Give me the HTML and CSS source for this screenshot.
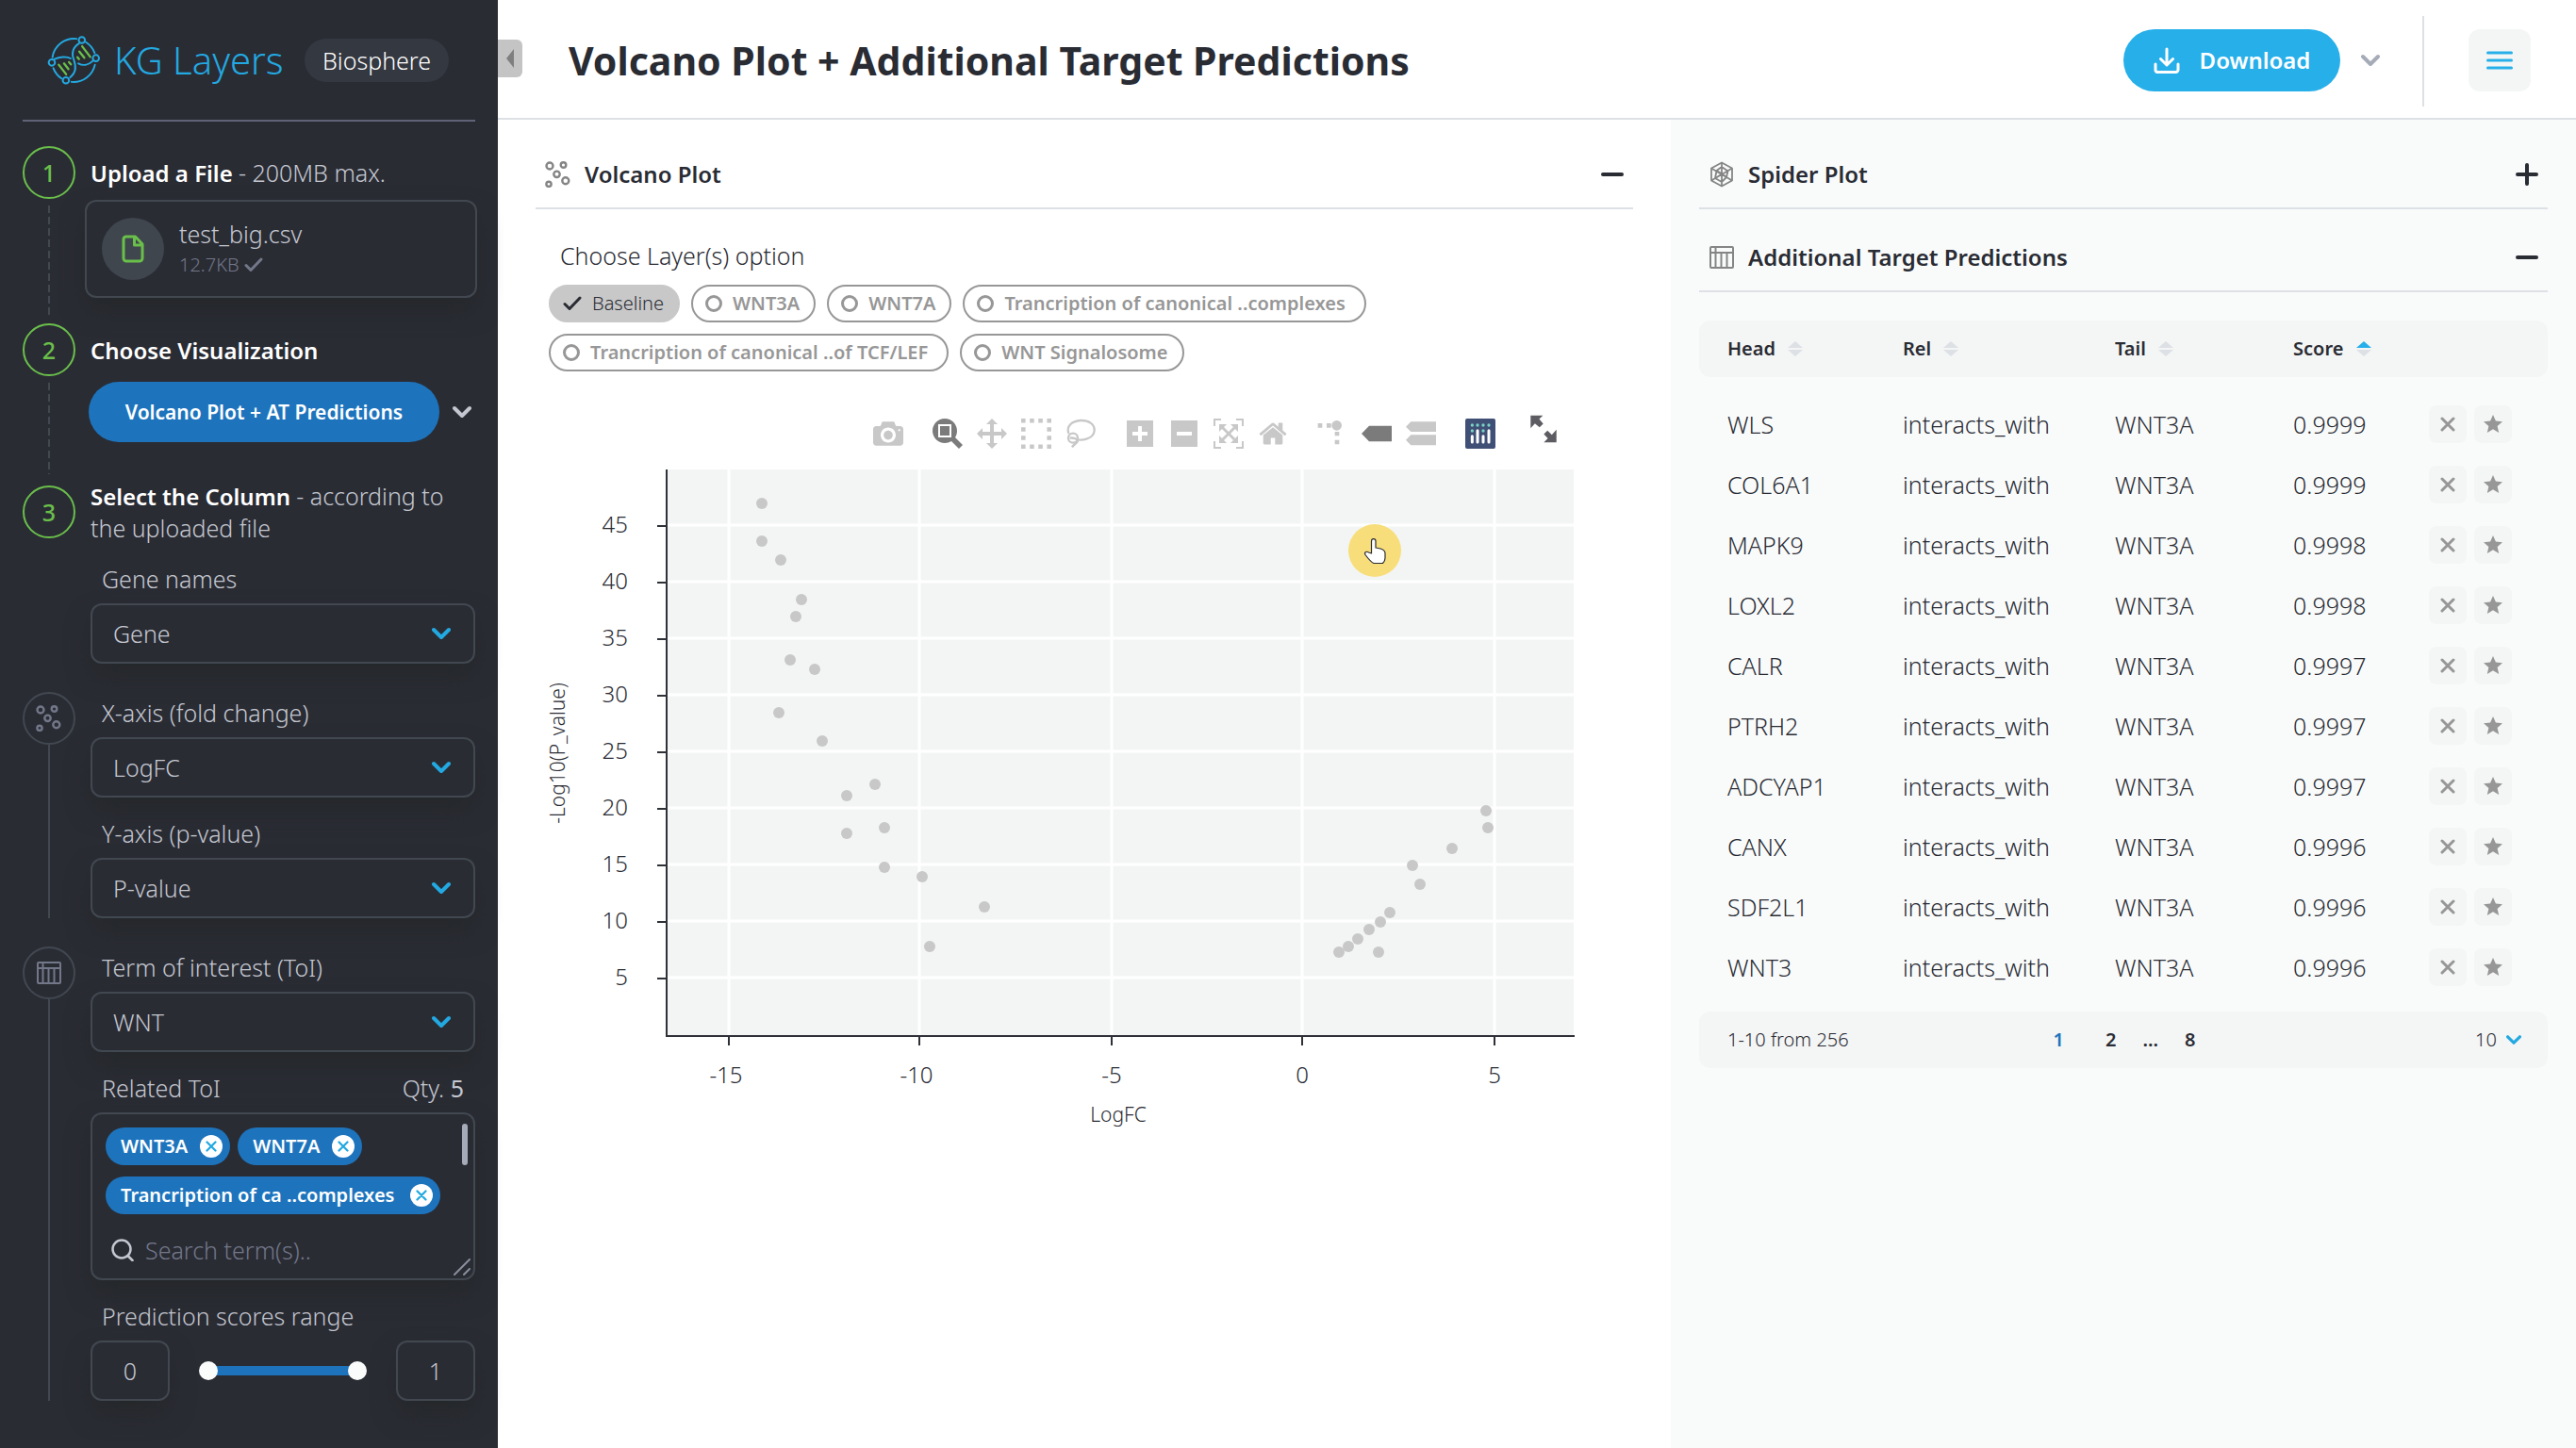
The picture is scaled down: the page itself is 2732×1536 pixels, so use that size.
FILE: index.html
```html
<!DOCTYPE html>
<html lang="en">
<head>
<meta charset="utf-8">
<meta name="viewport" content="width=device-width, initial-scale=1">
<title>KG Layers</title>
<link rel="stylesheet" href="styles.css">
</head>
<body>
<svg class="sprite" aria-hidden="true">
  <symbol id="chevron" viewBox="0 0 20 14"><path d="M2 3l8 8 8-8" fill="none" stroke="currentColor" stroke-width="4" stroke-linecap="round" stroke-linejoin="round"/></symbol>
  <symbol id="check" viewBox="0 0 20 16"><path d="M2 8.500l5 5L18 2" fill="none" stroke="currentColor" stroke-width="3" stroke-linecap="round" stroke-linejoin="round"/></symbol>
  <symbol id="cross" viewBox="0 0 16 16"><path d="M2 2l12 12M14 2L2 14" fill="none" stroke="currentColor" stroke-width="3" stroke-linecap="round"/></symbol>
  <symbol id="star" viewBox="0 0 20 20"><path d="M10 0l2.900 6.600 7.100.7-5.400 4.700 1.600 7L10 15.300 3.800 19l1.600-7L0 7.300l7.100-.7z" fill="currentColor"/></symbol>
  <symbol id="scatter" viewBox="0 0 28 28"><g fill="none" stroke="currentColor" stroke-width="2.400"><circle cx="5" cy="5" r="3.500"/><circle cx="19.500" cy="4" r="2.800"/><circle cx="12.500" cy="13.800" r="3.200"/><circle cx="21.800" cy="20.800" r="3.500"/><circle cx="4" cy="24.300" r="2.600"/></g></symbol>
  <symbol id="grid" viewBox="0 0 28 26"><g fill="none" stroke="currentColor" stroke-width="2"><rect x="2" y="2" width="24" height="22" rx="1"/><path d="M2 8h24M7.500 2v22M13.500 8v16M19.500 8v16"/></g></symbol>
  <symbol id="spider" viewBox="0 0 26 28"><g fill="none" stroke="currentColor" stroke-width="1.800" stroke-linejoin="round"><path d="M13 1.500l11 6v13l-11 6-11-6v-13zM13 6l6.500 4.500L18 17l-5 5-7-4 1.500-8zM13 1.500v25M2 7.500l22 13M24 7.500l-22 13M7.500 10l6 3.500 6-3M6 18l7.500-4.500L18 17"/></g></symbol>
  <symbol id="sort" viewBox="0 0 16 16"><path class="sort-up" d="M0 7l8-7 8 7z"/><path class="sort-down" d="M0 9h16l-8 7z"/></symbol>
</svg>

<div class="app">
  <aside class="sidebar">
    <div class="brand">
      <a class="brand-link" href="#">
        <svg class="logo" viewBox="28 31 172 162" aria-hidden="true">
          <g fill="none" stroke="#23a9e1" stroke-width="6" stroke-linecap="round">
            <path d="M45 102A70 70 0 0 1 122 43M152 54A70 70 0 0 1 180 88M181 126A70 70 0 0 1 106 181M74 170A70 70 0 0 1 48 137"/>
            <path d="M130 58C108 72 106 92 114 112C121 134 121 150 101 167M52 108C66 101 90 98 103 106M128 122C142 130 160 128 174 114"/>
            <circle cx="139" cy="47" r="10"/><circle cx="184" cy="105" r="10"/><circle cx="43" cy="119" r="10"/><circle cx="88" cy="176" r="10"/>
          </g>
          <g fill="none" stroke="#6abf4b" stroke-width="7" stroke-linecap="round">
            <path d="M65 126l24 31M82 122l14 18M98 118l6 7M140 67l26 34M131 84l16 20M125 102l5 6"/>
          </g>
        </svg>
        <span class="brand-name">KG Layers</span>
      </a>
      <span class="brand-tag">Biosphere</span>
    </div>

    <ol class="steps">
      <li class="step">
        <div class="rail rail-dashed"><span class="dot dot-number">1</span></div>
        <div class="step-body step-upload">
          <h2 class="step-title">Upload a File <span class="hint">- 200MB max.</span></h2>
          <div class="file">
            <span class="file-icon"><svg width="24" height="30" viewBox="0 0 24 30" aria-hidden="true"><path d="M4.500 2h10l7.500 8v15a3 3 0 0 1-3 3H5a3 3 0 0 1-3-3V5a3 3 0 0 1 2.500-3zM13.500 3v8H22" fill="none" stroke="#6abf4b" stroke-width="3" stroke-linejoin="round"/></svg></span>
            <div class="file-text">
              <span>test_big.csv</span>
              <span class="file-size">12.7KB <svg width="20" height="16" aria-hidden="true"><use href="#check"/></svg></span>
            </div>
          </div>
        </div>
      </li>
      <li class="step">
        <div class="rail rail-dashed"><span class="dot dot-number">2</span></div>
        <div class="step-body step-visual">
          <h2 class="step-title">Choose Visualization</h2>
          <div class="visual">
            <button class="visual-button" type="button">Volcano Plot + AT Predictions</button>
            <button class="icon-button" type="button" aria-label="More visualizations"><svg width="20" height="14"><use href="#chevron"/></svg></button>
          </div>
        </div>
      </li>
      <li class="step">
        <div class="rail rail-low"><span class="dot dot-number">3</span></div>
        <div class="step-body step-column">
          <h2 class="step-title">Select the Column <span class="hint">- according to the uploaded file</span></h2>
          <div class="field">
            <label for="gene">Gene names</label>
            <div class="select"><select id="gene"><option>Gene</option></select><svg width="20" height="14"><use href="#chevron"/></svg></div>
          </div>
        </div>
      </li>
      <li class="step step-axes">
        <div class="rail rail-solid"><span class="dot"><svg width="28" height="28"><use href="#scatter"/></svg></span></div>
        <div class="step-body step-fields">
          <div class="field">
            <label for="xaxis">X-axis (fold change)</label>
            <div class="select"><select id="xaxis"><option>LogFC</option></select><svg width="20" height="14"><use href="#chevron"/></svg></div>
          </div>
          <div class="field">
            <label for="yaxis">Y-axis (p-value)</label>
            <div class="select"><select id="yaxis"><option>P-value</option></select><svg width="20" height="14"><use href="#chevron"/></svg></div>
          </div>
        </div>
      </li>
      <li class="step">
        <div class="rail rail-solid"><span class="dot"><svg width="28" height="26"><use href="#grid"/></svg></span></div>
        <div class="step-body step-fields">
          <div class="field">
            <label for="toi">Term of interest (ToI)</label>
            <div class="select"><select id="toi"><option>WNT</option></select><svg width="20" height="14"><use href="#chevron"/></svg></div>
          </div>
          <div class="field">
            <div class="field-row"><label for="terms">Related ToI</label><span>Qty. <b>5</b></span></div>
            <div class="terms">
              <div class="tags">
                <span class="tag">WNT3A <button type="button" aria-label="Remove WNT3A"><svg width="12" height="12"><use href="#cross"/></svg></button></span>
                <span class="tag">WNT7A <button type="button" aria-label="Remove WNT7A"><svg width="12" height="12"><use href="#cross"/></svg></button></span>
                <span class="tag tag-wide">Trancription of ca ..complexes <button type="button" aria-label="Remove term"><svg width="12" height="12"><use href="#cross"/></svg></button></span>
              </div>
              <div class="search">
                <svg width="24" height="24" viewBox="0 0 24 24" aria-hidden="true"><g fill="none" stroke="currentColor" stroke-width="2.500" stroke-linecap="round"><circle cx="11" cy="11" r="9.500"/><path d="M17.500 18l5 5"/></g></svg>
                <input id="terms" type="text" placeholder="Search term(s)..">
              </div>
              <span class="scroll-thumb"></span>
              <svg class="grip" width="18" height="18" viewBox="0 0 18 18" aria-hidden="true"><path d="M1 17L17 1M11 17l6-6" stroke="#8a8f9c" stroke-width="2" stroke-linecap="round"/></svg>
            </div>
          </div>
          <div class="field">
            <label for="score-min">Prediction scores range</label>
            <div class="range-row">
              <input class="number" id="score-min" type="text" value="0">
              <div class="range">
                <input type="range" min="0" max="1" step="0.100" value="0" aria-label="Lowest score">
                <input type="range" min="0" max="1" step="0.100" value="1" aria-label="Highest score">
              </div>
              <input class="number" type="text" value="1" aria-label="Highest score">
            </div>
          </div>
        </div>
      </li>
    </ol>
  </aside>

  <div class="page">
    <header class="topbar">
      <button class="collapse" type="button" aria-label="Collapse sidebar"><svg width="8" height="20" viewBox="0 0 8 20"><path d="M8 0v20L0 10z" fill="#7f7f7f"/></svg></button>
      <h1>Volcano Plot + Additional Target Predictions</h1>
      <div class="actions">
        <button class="download" type="button">
          <svg width="28" height="28" viewBox="0 0 28 28" aria-hidden="true"><path d="M14 2v17M7.500 12.500L14 19l6.500-6.500M2 18v6a2.500 2.500 0 0 0 2.500 2.500h19A2.500 2.500 0 0 0 26 24v-6" fill="none" stroke="#fff" stroke-width="3" stroke-linecap="round" stroke-linejoin="round"/></svg>
          Download
        </button>
        <button class="icon-button download-more" type="button" aria-label="Download options"><svg width="20" height="14"><use href="#chevron"/></svg></button>
        <button class="menu" type="button" aria-label="Menu"><svg width="28" height="20" viewBox="0 0 28 20"><path d="M1.500 2h25M1.500 10h25M1.500 18h25" stroke="#27afea" stroke-width="3" stroke-linecap="round"/></svg></button>
      </div>
    </header>

    <div class="columns">
      <main class="plot-panel">
        <h2 class="section-title"><button type="button">
          <svg width="28" height="28"><use href="#scatter"/></svg><span>Volcano Plot</span>
          <svg class="toggle" width="24" height="24" viewBox="0 0 24 24"><path d="M2 12h20" stroke="currentColor" stroke-width="4" stroke-linecap="round"/></svg>
        </button></h2>

        <fieldset class="layers">
          <legend>Choose Layer(s) option</legend>
          <label class="chip"><input type="checkbox" checked><svg width="20" height="16"><use href="#check"/></svg>Baseline</label>
          <label class="chip"><input type="checkbox">WNT3A</label>
          <label class="chip"><input type="checkbox">WNT7A</label>
          <label class="chip chip-wide"><input type="checkbox">Trancription of canonical ..complexes</label>
          <label class="chip chip-wide"><input type="checkbox">Trancription of canonical ..of TCF/LEF</label>
          <label class="chip"><input type="checkbox">WNT Signalosome</label>
        </fieldset>

        <div class="modebar">
          <div class="group">
            <button type="button" aria-label="Save picture"><svg viewBox="0 0 1000 1000"><path transform="matrix(1 0 0 -1 0 850)" d="m500 450c-83 0-150-67-150-150 0-83 67-150 150-150 83 0 150 67 150 150 0 83-67 150-150 150z m400 150h-120c-16 0-34 13-39 29l-31 93c-6 15-23 28-40 28h-340c-16 0-34-13-39-28l-31-94c-6-15-23-28-40-28h-120c-55 0-100-45-100-100v-450c0-55 45-100 100-100h800c55 0 100 45 100 100v450c0 55-45 100-100 100z m-400-550c-138 0-250 112-250 250 0 138 112 250 250 250 138 0 250-112 250-250 0-138-112-250-250-250z m365 380c-19 0-35 16-35 35 0 19 16 35 35 35 19 0 35-16 35-35 0-19-16-35-35-35z"/></svg></button>
          </div>
          <div class="group">
            <button class="active" type="button" aria-label="Zoom"><svg viewBox="0 0 1000 1000"><path transform="matrix(1 0 0 -1 0 850)" d="m1000-25l-250 251c40 63 63 138 63 218 0 224-182 406-407 406-224 0-406-182-406-406s183-406 407-406c80 0 155 22 218 62l250-250 125 125z m-812 250l0 438 437 0 0-438-437 0z m62 375l313 0 0-312-313 0 0 312z"/></svg></button>
            <button type="button" aria-label="Pan"><svg viewBox="0 0 1000 1000"><path transform="matrix(1 0 0 -1 0 850)" d="m1000 350l-187 188 0-125-250 0 0 250 125 0-188 187-187-187 125 0 0-250-250 0 0 125-188-188 186-187 0 125 252 0 0-250-125 0 187-188 188 188-125 0 0 250 250 0 0-126 187 188z"/></svg></button>
            <button type="button" aria-label="Box select"><svg viewBox="0 0 1000 1000"><path transform="matrix(1 0 0 -1 0 850)" d="m0 850l0-143 143 0 0 143-143 0z m286 0l0-143 143 0 0 143-143 0z m285 0l0-143 143 0 0 143-143 0z m286 0l0-143 143 0 0 143-143 0z m-857-286l0-143 143 0 0 143-143 0z m857 0l0-143 143 0 0 143-143 0z m-857-285l0-143 143 0 0 143-143 0z m857 0l0-143 143 0 0 143-143 0z m-857-286l0-143 143 0 0 143-143 0z m286 0l0-143 143 0 0 143-143 0z m285 0l0-143 143 0 0 143-143 0z m286 0l0-143 143 0 0 143-143 0z"/></svg></button>
            <button type="button" aria-label="Lasso select"><svg viewBox="0 0 96 96"><g fill="none" stroke="currentColor" stroke-width="7"><path d="M10 48C2 24 20 8 48 6c26-1 44 12 44 30S76 66 48 68c-6 0-10 0-14-2"/><circle cx="24" cy="62" r="15"/><path d="M14 62c10-2 24 2 25 9 1 5-12 10-18 20"/></g></svg></button>
          </div>
          <div class="group">
            <button type="button" aria-label="Zoom in"><svg viewBox="-62 0 1000 1000"><path transform="matrix(1 0 0 -1 0 850)" d="m1 787l0-875 875 0 0 875-875 0z m687-500l-187 0 0-187-125 0 0 187-188 0 0 125 188 0 0 187 125 0 0-187 187 0 0-125z"/></svg></button>
            <button type="button" aria-label="Zoom out"><svg viewBox="-62 0 1000 1000"><path transform="matrix(1 0 0 -1 0 850)" d="m0 788l0-876 875 0 0 876-875 0z m688-500l-500 0 0 125 500 0 0-125z"/></svg></button>
            <button type="button" aria-label="Autoscale"><svg viewBox="0 0 1000 1000"><path transform="matrix(1 0 0 -1 0 850)" d="m250 850l-187 0-63 0 0-62 0-188 63 0 0 188 187 0 0 62z m688 0l-188 0 0-62 188 0 0-188 62 0 0 188 0 62-62 0z m-875-938l0 188-63 0 0-188 0-62 63 0 187 0 0 62-187 0z m875 188l0-188-188 0 0-62 188 0 62 0 0 62 0 188-62 0z m-125 188l-1 0-93-94-156 156 156 156 92-93 2 0 0 250-250 0 0-2 93-92-156-156-156 156 94 92 0 2-250 0 0-250 0 0 93 93 157-156-157-156-93 94 0 0 0-250 250 0 0 0-94 93 156 157 156-157-93-93 0 0 250 0 0 250z"/></svg></button>
            <button type="button" aria-label="Reset axes"><svg viewBox="-36 0 1000 1000"><path transform="matrix(1 0 0 -1 0 850)" d="m786 296v-267q0-15-11-26t-25-10h-214v214h-143v-214h-214q-15 0-25 10t-11 26v267q0 1 0 2t0 2l321 264 321-264q1-1 1-4z m124 39l-34-41q-5-5-12-6h-2q-7 0-12 3l-386 322-386-322q-7-4-13-4-7 2-12 7l-35 41q-4 5-3 13t6 12l401 334q18 15 42 15t43-15l136-114v109q0 8 5 13t13 5h107q8 0 13-5t5-13v-227l122-102q5-5 6-12t-4-13z"/></svg></button>
          </div>
          <div class="group">
            <button type="button" aria-label="Spike lines"><svg viewBox="0 0 96 96"><path d="M2 15h14v14H2zM30 15h14v14H30zM56 42h14v13H56zM56 68h14v14H56z"/><circle cx="62" cy="22" r="16"/></svg></button>
            <button class="active" type="button" aria-label="Closest data on hover"><svg viewBox="0 0 96 96"><path d="M0 48l24-25h72v50H24z"/></svg></button>
            <button type="button" aria-label="Compare data on hover"><svg viewBox="0 0 96 96"><path d="M0 26l16-16h80v32H16zM0 68l16-16h80v33H16z"/></svg></button>
          </div>
          <div class="group">
            <button type="button" aria-label="Chart library"><svg viewBox="0 0 96 96"><rect width="96" height="96" rx="6" fill="#3f4f75"/><g stroke="#fff" stroke-width="9" stroke-linecap="round"><path d="M22 56v19M39 38v37M57 56v19M75 38v37"/></g><g fill="#79d3c6"><circle cx="22" cy="21" r="5"/><circle cx="39" cy="21" r="5"/><circle cx="57" cy="21" r="5"/><circle cx="75" cy="21" r="5"/><circle cx="22" cy="39" r="5"/><circle cx="57" cy="39" r="5"/></g></svg></button>
          </div>
          <button class="expand" type="button" aria-label="Full screen"><svg viewBox="0 0 84 92"><path d="M0 2h40L28 14l13 15-12 12L14 28 0 44zM84 90H43l13-13-13-14 12-12 14 14 15-17z"/></svg></button>
        </div>

        <svg class="chart" viewBox="568 498 1164 720" role="img" aria-label="Volcano plot of LogFC against -Log10(P_value)">
          <rect x="707" y="498" width="962" height="601" fill="#f3f5f4"/>
          <path class="gridline" d="M773 498v600M975 498v600M1179 498v600M1381 498v600M1585 498v600M707 557h962M707 617h962M707 677h962M707 737h962M707 797h962M707 857h962M707 917h962M707 977h962M707 1037h962"/>
          <path class="axis" d="M707 498v601h963M697 558h10M697 618h10M697 678h10M697 738h10M697 798h10M697 858h10M697 918h10M697 978h10M697 1038h10M773 1099v10M975 1099v10M1179 1099v10M1381 1099v10M1585 1099v10"/>
          <g class="ticks ticks-y">
            <text x="666" y="565">45</text><text x="666" y="625">40</text><text x="666" y="685">35</text><text x="666" y="745">30</text><text x="666" y="805">25</text><text x="666" y="865">20</text><text x="666" y="925">15</text><text x="666" y="985">10</text><text x="666" y="1045">5</text>
          </g>
          <g class="ticks ticks-x">
            <text x="770" y="1149">-15</text><text x="972" y="1149">-10</text><text x="1179" y="1149">-5</text><text x="1381" y="1149">0</text><text x="1585" y="1149">5</text>
          </g>
          <text class="axis-title" x="1186" y="1190">LogFC</text>
          <text class="axis-title" transform="translate(599 799) rotate(-90)">-Log10(P_value)</text>
          <g fill="#c8c8c8">
            <circle cx="808" cy="534" r="6"/><circle cx="808" cy="574" r="6"/><circle cx="828" cy="594" r="6"/><circle cx="850" cy="636" r="6"/><circle cx="844" cy="654" r="6"/><circle cx="838" cy="700" r="6"/><circle cx="864" cy="710" r="6"/><circle cx="826" cy="756" r="6"/><circle cx="872" cy="786" r="6"/><circle cx="928" cy="832" r="6"/><circle cx="898" cy="844" r="6"/><circle cx="898" cy="884" r="6"/><circle cx="938" cy="878" r="6"/><circle cx="938" cy="920" r="6"/><circle cx="978" cy="930" r="6"/><circle cx="1044" cy="962" r="6"/><circle cx="986" cy="1004" r="6"/>
            <circle cx="1576" cy="860" r="6"/><circle cx="1578" cy="878" r="6"/><circle cx="1540" cy="900" r="6"/><circle cx="1498" cy="918" r="6"/><circle cx="1506" cy="938" r="6"/><circle cx="1474" cy="968" r="6"/><circle cx="1464" cy="978" r="6"/><circle cx="1452" cy="986" r="6"/><circle cx="1440" cy="996" r="6"/><circle cx="1430" cy="1004" r="6"/><circle cx="1420" cy="1010" r="6"/><circle cx="1462" cy="1010" r="6"/>
          </g>
          <circle cx="1458" cy="584" r="28" fill="#f8de7a"/>
          <path d="M1454.500 585v-11c0-3.200 4.500-3.200 4.500 0v7l5 1c3 1 5 2.500 5 5v5c0 2-1 4-2.500 5.500h-9.500c-3-1-6-5-9-9-1.500-3 1.500-4 3.500-2.500l3 1z" fill="#fff" stroke="#2a2c34" stroke-width="1.200" stroke-linejoin="round"/>
        </svg>
      </main>

      <section class="side-panel">
        <h2 class="section-title"><button type="button">
          <svg width="28" height="28"><use href="#spider"/></svg><span>Spider Plot</span>
          <svg class="toggle" width="24" height="24" viewBox="0 0 24 24"><path d="M2 12h20M12 2v20" stroke="currentColor" stroke-width="4" stroke-linecap="round"/></svg>
        </button></h2>
        <h2 class="section-title"><button type="button">
          <svg width="28" height="26"><use href="#grid"/></svg><span>Additional Target Predictions</span>
          <svg class="toggle" width="24" height="24" viewBox="0 0 24 24"><path d="M2 12h20" stroke="currentColor" stroke-width="4" stroke-linecap="round"/></svg>
        </button></h2>

        <table class="predictions">
          <colgroup><col class="col-head"><col class="col-rel"><col class="col-tail"><col class="col-score"><col></colgroup>
          <thead><tr>
            <th scope="col">Head <svg width="16" height="16"><use href="#sort"/></svg></th>
            <th scope="col">Rel <svg width="16" height="16"><use href="#sort"/></svg></th>
            <th scope="col">Tail <svg width="16" height="16"><use href="#sort"/></svg></th>
            <th scope="col">Score <svg class="sorted" width="16" height="16"><use href="#sort"/></svg></th>
            <td></td>
          </tr></thead>
          <tbody id="rows"></tbody>
        </table>

        <div class="pager">
          <span>1-10 from 256</span>
          <nav aria-label="Pages"><a class="current" href="#p1">1</a><a href="#p2">2</a><span>...</span><a href="#p8">8</a></nav>
          <div class="page-size"><select aria-label="Rows per page"><option>10</option></select><svg width="16" height="12"><use href="#chevron"/></svg></div>
        </div>
      </section>
    </div>
  </div>
</div>
<script src="rows.js"></script>
</body>
</html>
```
FILE: rows.js
```js
const predictions = [
  ["WLS", "0.9999"], ["COL6A1", "0.9999"], ["MAPK9", "0.9998"], ["LOXL2", "0.9998"],
  ["CALR", "0.9997"], ["PTRH2", "0.9997"], ["ADCYAP1", "0.9997"], ["CANX", "0.9996"],
  ["SDF2L1", "0.9996"], ["WNT3", "0.9996"]
];

document.getElementById("rows").innerHTML = predictions.map(([head, score]) => `
  <tr>
    <td>${head}</td><td>interacts_with</td><td>WNT3A</td><td>${score}</td>
    <td><div class="row-actions">
      <button type="button" aria-label="Remove ${head}"><svg width="16" height="16"><use href="#cross"/></svg></button>
      <button type="button" aria-label="Favourite ${head}"><svg width="20" height="20"><use href="#star"/></svg></button>
    </div></td>
  </tr>`).join("");
```
FILE: styles.css
```css
* { box-sizing: border-box; }

body {
  margin: 0;
  font: 300 25px/34px "Noto Sans", sans-serif;
  color: #2a2c34;
  background: #fff;
}

h1, h2, ol, fieldset { margin: 0; padding: 0; border: 0; font-size: inherit; }
button, input, select { font: inherit; color: inherit; }
button { display: inline-flex; align-items: center; justify-content: center; padding: 0; border: 0; background: none; cursor: pointer; }
a { color: inherit; text-decoration: none; }
svg { flex: none; }
.sprite { position: absolute; width: 0; height: 0; }

.app { display: flex; min-height: 100vh; }

/* Sidebar */
.sidebar { flex: none; width: 528px; padding: 0 24px 48px; background: #2a2c34; color: #c4c7d0; }
.brand { display: flex; align-items: center; justify-content: space-between; height: 129px; padding: 0 28px 0 26px; border-bottom: 2px solid #606377; }
.brand-link { display: flex; align-items: center; gap: 14px; color: #23a9e1; }
.logo { width: 57px; height: 54px; }
.brand-name { font-size: 40px; line-height: 48px; }
.brand-tag { padding: 6px 19px; border-radius: 23px; background: #343840; color: #fff; }

.steps { list-style: none; padding-top: 26px; }
.step { display: flex; gap: 16px; }
.rail { display: flex; flex-direction: column; align-items: center; gap: 7px; flex: none; width: 56px; }
.rail-low { padding-top: 5px; }
.rail-dashed::after { content: ""; flex: 1; width: 2px; margin-bottom: 7px; background: repeating-linear-gradient(#424850 0 8px, transparent 8px 12px); }
.rail-solid { gap: 0; }
.rail-solid::after { content: ""; flex: 1; width: 2px; background: #424850; }
.dot { display: flex; align-items: center; justify-content: center; width: 56px; height: 56px; border: 2px solid #424850; border-radius: 50%; color: #727789; }
.dot-number { border-color: #6abf4b; color: #6abf4b; font-weight: 500; }
.step-body { flex: 1; min-width: 0; }
.step-title { font-size: 24px; font-weight: 600; color: #fff; }
.hint { font-size: 25px; line-height: 24px; font-weight: 300; color: #c4c7d0; }
.step-upload { padding: 12px 0 27px; }
.step-visual { padding: 12px 0 41px; }
.step-column { padding-bottom: 30px; }
.step-column .field { margin-top: 19px; }
.step-fields { display: flex; flex-direction: column; gap: 21px; padding-top: 5px; }
.step-axes { margin-bottom: 30px; }

.file { display: flex; align-items: center; gap: 16px; height: 104px; margin: 11px -2px 0 -6px; padding: 0 16px; border: 2px solid #424850; border-radius: 12px; box-shadow: 0 14px 24px #25282b; }
.file-icon { display: flex; align-items: center; justify-content: center; width: 66px; height: 66px; border-radius: 50%; background: #3f464e; }
.file-text { display: flex; flex-direction: column; }
.file-size { font-size: 20px; line-height: 32px; color: #727789; }
.file-size svg { vertical-align: -1px; }

.visual { display: flex; align-items: center; justify-content: space-between; margin: 16px 4px 0 -2px; }
.visual-button { width: 372px; height: 64px; border-radius: 32px; background: #1d74bd; color: #fff; font-size: 21px; font-weight: 600; }

.field { display: flex; flex-direction: column; gap: 9px; }
.field > label, .field-row { padding: 0 12px; }
.field-row { display: flex; justify-content: space-between; }
.select { display: grid; align-items: center; }
.select > * { grid-area: 1 / 1; }
.select svg { justify-self: end; margin-right: 26px; color: #23a9e1; pointer-events: none; }
.select select, .number, .terms { border: 2px solid #424850; border-radius: 12px; background: #2a2c34; box-shadow: 0 14px 24px #25282b; }
.select select { appearance: none; width: 100%; height: 64px; padding: 0 22px; outline: none; }

.terms { position: relative; height: 178px; padding: 14px; }
.tags { display: flex; flex-wrap: wrap; gap: 12px 8px; }
.tag { display: flex; align-items: center; gap: 13px; height: 40px; padding: 0 8px 0 16px; border-radius: 20px; background: #1d74bd; color: #fff; font-size: 20px; font-weight: 600; }
.tag-wide { gap: 17px; }
.tag button { width: 24px; height: 24px; border-radius: 50%; background: #fff; color: #23a9e1; }
.search { display: flex; align-items: center; gap: 12px; height: 40px; margin-top: 18px; padding-left: 6px; }
.search input { width: 280px; height: 40px; padding: 0; border: 0; background: none; outline: none; }
.search input::placeholder { color: #727789; }
.scroll-thumb { position: absolute; top: 10px; right: 6px; width: 6px; height: 44px; border-radius: 3px; background: #a6abb8; }
.grip { position: absolute; right: 3px; bottom: 3px; }

.range-row { display: flex; align-items: center; justify-content: space-between; }
.number { width: 84px; height: 64px; text-align: center; }
.range { display: grid; flex: 1; max-width: 178px; height: 20px; }
.range::before, .range input { grid-area: 1 / 1; }
.range::before { content: ""; align-self: center; height: 10px; margin: 0 10px; background: #1d74bd; }
.range input { appearance: none; width: 100%; height: 20px; margin: 0; background: none; pointer-events: none; }
.range input::-webkit-slider-thumb { appearance: none; width: 20px; height: 20px; border-radius: 50%; background: #fafcfc; pointer-events: auto; }

/* Top bar */
.page { flex: 1; min-width: 0; display: flex; flex-direction: column; }
.topbar { position: relative; display: flex; align-items: center; justify-content: space-between; height: 127px; padding: 2px 48px 0 75px; border-bottom: 2px solid #dde0e5; }
.topbar h1 { font-size: 41px; line-height: 48px; font-weight: 700; }
.collapse { position: absolute; left: 0; top: 42px; width: 26px; height: 40px; border-radius: 0 6px 6px 0; background: #c4c4c4; }
.actions { display: flex; align-items: center; }
.download { gap: 21px; width: 230px; height: 66px; border-radius: 33px; background: #27afea; color: #fff; font-size: 24px; font-weight: 600; }
.download-more { margin: 0 45px 0 22px; color: #a6abb8; }
.menu { position: relative; width: 66px; height: 66px; margin-left: 49px; border-radius: 12px; background: #f4f6f5; }
.menu::before { content: ""; position: absolute; left: -49px; top: -14px; width: 2px; height: 96px; background: #dde0e5; }

/* Content columns */
.columns { flex: 1; display: grid; grid-template-columns: minmax(0, 1244fr) minmax(0, 960fr); }
.plot-panel { padding: 7px 40px 0; }
.side-panel { padding: 7px 30px 0; background: #f9fbfb; }
.section-title button { width: 100%; height: 88px; justify-content: flex-start; gap: 14px; padding: 16px 10px 0; border-bottom: 2px solid #dde0e5; font-size: 24px; font-weight: 600; }
.section-title svg { color: #858585; }
.section-title .toggle { margin-left: auto; color: #2a2c34; }

.layers { display: flex; flex-wrap: wrap; gap: 12px; padding: 0 260px 0 14px; }
.layers legend { padding: 32px 12px 14px; }
.chip { display: flex; align-items: center; gap: 11px; height: 40px; padding: 0 15px 0 13px; border: 2px solid #979797; border-radius: 20px; color: #979797; font-size: 20px; font-weight: 600; }
.chip-wide { padding-right: 20px; }
.chip input { appearance: none; width: 18px; height: 18px; margin: 0; border: 3px solid #979797; border-radius: 50%; }
.chip:has(:checked) { border-color: #c8c8c8; background: #c8c8c8; color: #2a2c34; font-weight: 300; }
.chip input:checked { display: none; }

.modebar { display: flex; align-items: center; justify-content: flex-end; gap: 31px; height: 32px; margin: 50px 79px 22px 0; }
.group { display: flex; gap: 15px; }
.modebar button { width: 32px; height: 32px; color: #c8c8c8; }
.modebar svg { width: 32px; height: 32px; fill: currentColor; }
.modebar .active { color: #7b7b7b; }
.modebar .expand { margin: -10px 0 0 4px; color: #5c5c62; }
.modebar .expand svg { width: 28px; height: 30px; }
.chart { display: block; width: 100%; }
.gridline { stroke: #fff; stroke-width: 3; }
.axis { fill: none; stroke: #2f3138; stroke-width: 2; }
.chart text { fill: #2a2c34; text-anchor: middle; }
.chart .ticks text { font-size: 24px; }
.chart .ticks-y text { text-anchor: end; }
.chart .axis-title { font-size: 21px; }

/* Predictions table */
.predictions { width: 100%; margin-top: 30px; table-layout: fixed; border-spacing: 0; }
.col-head { width: 24%; }
.col-rel { width: 25%; }
.col-tail { width: 21%; }
.col-score { width: 16%; }
.predictions th, .predictions td { padding: 0; text-align: left; }
.predictions thead { background: #f4f5f5; font-size: 20px; }
.predictions thead tr > * { height: 60px; font-weight: 600; }
.predictions tr > :first-child { padding-left: 30px; border-radius: 12px 0 0 12px; }
.predictions tr > :last-child { border-radius: 0 12px 12px 0; }
.predictions th svg { margin-left: 8px; vertical-align: -1px; fill: #dde0e5; }
.predictions .sorted { --up: #27afea; }
.sort-up { fill: var(--up, #dde0e5); }
.predictions tbody::before { content: ""; display: block; height: 18px; }
.predictions tbody td { height: 64px; }
.row-actions { display: flex; gap: 8px; }
.row-actions button { width: 40px; height: 40px; border-radius: 8px; background: #f4f5f5; color: #979797; }

.pager { display: grid; grid-template-columns: 1fr auto 1fr; align-items: center; height: 60px; margin-top: 15px; padding: 0 28px 0 30px; border-radius: 12px; background: #f4f5f5; font-size: 20px; }
.pager nav { display: flex; gap: 28px; font-weight: 600; }
.pager .current { margin-right: 16px; color: #1d74bd; }
.page-size { justify-self: end; display: flex; align-items: center; gap: 10px; }
.page-size select { appearance: none; padding: 0; border: 0; background: none; outline: none; }
.page-size svg { color: #23a9e1; }
```
